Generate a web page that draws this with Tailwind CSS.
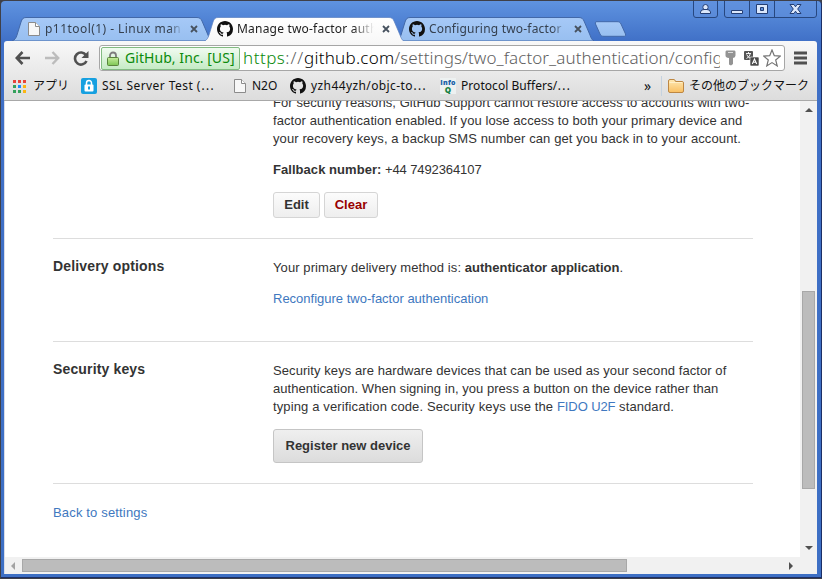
<!DOCTYPE html>
<html lang="en">
<head>
<meta charset="utf-8">
<title>Manage two-factor authentication</title>
<script src="https://cdn.jsdelivr.net/npm/@tailwindcss/browser@4"></script>
</head>
<body class="w-[822px] h-[579px] overflow-hidden bg-[#3f4048]">
<svg class="absolute w-0 h-0">
  <defs>
    <linearGradient id="inactive" x1="0" y1="0" x2="0" y2="1"><stop offset="0" stop-color="#a6c9f7"/><stop offset="1" stop-color="#98bff0"/></linearGradient>
    <linearGradient id="active" x1="0" y1="0" x2="0" y2="1"><stop offset="0" stop-color="#ffffff"/><stop offset="1" stop-color="#f8f8f8"/></linearGradient>
    <linearGradient id="folder" x1="0" y1="0" x2="0" y2="1"><stop offset="0" stop-color="#ffe9b4"/><stop offset="1" stop-color="#f9bf62"/></linearGradient>
    <linearGradient id="lock" x1="0" y1="0" x2="0" y2="1"><stop offset="0" stop-color="#c5ee9c"/><stop offset="1" stop-color="#7cc653"/></linearGradient>
    <symbol id="octocat" viewBox="0 0 16 16"><path fill="#111" d="M8 0C3.58 0 0 3.58 0 8c0 3.54 2.29 6.53 5.47 7.59.4.07.55-.17.55-.38 0-.19-.01-.82-.01-1.49-2.01.37-2.53-.49-2.69-.94-.09-.23-.48-.94-.82-1.13-.28-.15-.68-.52-.01-.53.63-.01 1.08.58 1.23.82.72 1.21 1.87.87 2.33.66.07-.52.28-.87.51-1.07-1.78-.2-3.64-.89-3.64-3.95 0-.87.31-1.59.82-2.15-.08-.2-.36-1.02.08-2.12 0 0 .67-.21 2.2.82a7.6 7.6 0 0 1 4 0c1.53-1.04 2.2-.82 2.2-.82.44 1.1.16 1.92.08 2.12.51.56.82 1.27.82 2.15 0 3.07-1.87 3.75-3.65 3.95.29.25.54.73.54 1.48 0 1.07-.01 1.93-.01 2.2 0 .21.15.46.55.38A8.01 8.01 0 0 0 16 8c0-4.42-3.58-8-8-8z"/></symbol>
    <symbol id="page" viewBox="0 0 12 14"><path d="M.5.5h7l4 4v9H.5z" fill="#f7f7f7" stroke="#8b8b8b"/><path d="M7.5.5v4h4" fill="#fff" stroke="#8b8b8b"/></symbol>
    <symbol id="close" viewBox="0 0 8 8"><path d="M1 1l6 6M7 1L1 7" stroke="#47525f" stroke-width="1.8"/></symbol>
  </defs>
</svg>
<div class="w-[821px] h-[577px] mt-px ml-px rounded-t-[4px] bg-linear-to-b from-[#5f93e0] via-[#3f6fc6] via-[42px] to-[#3d6fc4] pl-[3px] pr-[4px] flex flex-col border-r border-b border-[#1c2f66] font-['Noto_Sans','Noto_Sans_CJK_JP',sans-serif]">
  <div class="h-[40px] shrink-0 relative flex text-[12px] text-[#35404f]">
    <div class="ml-[8px] w-[200px] h-[24px] mt-[16px] relative shrink-0">
      <svg class="absolute inset-0" width="200" height="24" viewBox="0 0 200 24"><path d="M0 24C3 23 4 21 5 18L9 5C10 2 11 .5 14 .5H185C188 .5 189 2 190 4L196 18C197 21 198 23 200 24z" fill="url(#inactive)" stroke="#4268a8"/></svg>
      <div class="relative flex items-center h-[23px] pl-[16px]">
        <svg width="12" height="14"><use href="#page" width="12" height="14"/></svg>
        <span class="ml-[5px] w-[138px] overflow-hidden whitespace-nowrap tracking-[0.45px] mask-r-from-90%">p11tool(1) - Linux man</span>
        <svg class="ml-[7px]" width="8" height="8"><use href="#close" width="8" height="8"/></svg>
      </div>
    </div>
    <div class="-ml-[8px] w-[200px] h-[24px] mt-[16px] relative shrink-0 z-10 text-[#222]">
      <svg class="absolute inset-0" width="200" height="25" viewBox="0 0 200 25"><path d="M0 24.5C3 23 4 21 5 18L9 5C10 2 11 .5 14 .5H185C188 .5 189 2 190 4L196 18C197 21 198 23 200 24.5z" fill="url(#active)" stroke="#5a7fc0" stroke-width=".7"/><path d="M0 24.500H200" stroke="#f8f8f8"/></svg>
      <div class="relative flex items-center h-[23px] pl-[13px]">
        <svg width="16" height="16"><use href="#octocat" width="16" height="16"/></svg>
        <span class="ml-[4px] w-[137px] overflow-hidden whitespace-nowrap tracking-[0.2px] mask-r-from-85%">Manage two-factor auth</span>
        <svg class="ml-[8px]" width="8" height="8"><use href="#close" width="8" height="8"/></svg>
      </div>
    </div>
    <div class="-ml-[8px] w-[200px] h-[24px] mt-[16px] relative shrink-0">
      <svg class="absolute inset-0" width="200" height="24" viewBox="0 0 200 24"><path d="M0 24C3 23 4 21 5 18L9 5C10 2 11 .5 14 .5H183C186 .5 187 2 188 4L194 18C195 21 196 23 198 24z" fill="url(#inactive)" stroke="#4268a8"/></svg>
      <div class="relative flex items-center h-[23px] pl-[13px]">
        <svg width="16" height="16"><use href="#octocat" width="16" height="16"/></svg>
        <span class="ml-[4px] w-[137px] overflow-hidden whitespace-nowrap tracking-[0.2px] mask-r-from-90%">Configuring two-factor</span>
        <svg class="ml-[8px]" width="8" height="8"><use href="#close" width="8" height="8"/></svg>
      </div>
    </div>
    <svg class="-ml-[2px] mt-[20px] shrink-0" width="34" height="16" viewBox="0 0 34 16"><path d="M3 .7H23C25 .7 26 1 27 3L31.500 13C32 15 31 15.300 30 15.300H10C8 15.300 7 15 6 13L1.500 3C1 1.500 1.500 .7 3 .7z" fill="url(#inactive)" stroke="#4268a8"/></svg>
    <svg class="absolute left-[689px] top-0" width="124" height="18" viewBox="0 0 124 18" stroke="#27477f">
      <path d="M.5 0V14Q.5 16.500 3 16.500H22Q24.500 16.500 24.500 14V0M31.500 0V14Q31.500 16.500 34 16.500H121Q123.500 16.500 123.500 14V0M56.500 0V16.500M81.500 0V16.500" fill="#628fdc" fill-opacity=".5"/>
      <g fill="#dbe7fb" stroke="#243e74"><circle cx="12.500" cy="6.200" r="2.700"/><path d="M7.500 12.500V11Q8 8.500 11 8.500H14Q17 8.500 17.500 11V12.500zM38.500 9.500H49.500V12.500H38.500z"/><path d="M63.500 3.500H74.500V12.500H63.500zM67.500 6.500V9.500H70.500V6.500z" fill-rule="evenodd"/><path transform="translate(7.500 0)" d="M89.500 3.500H93.500L95 5.800L96.500 3.500H100.500L97.200 8L100.500 12.500H96.500L95 10.200L93.500 12.500H89.500L92.800 8z"/></g>
    </svg>
  </div>
  <div class="h-[60px] shrink-0 rounded-t-[3px] bg-linear-to-b from-[#f8f8f8] to-[#dcdcdc] flex flex-col relative">
    <div class="h-[34px] flex items-center pl-[11px]">
      <svg width="16" height="14" viewBox="0 0 16 14" fill="none" stroke="#505050" stroke-width="2.600"><path d="M15 7H2M7.500 1L1.800 7L7.500 13"/></svg>
      <svg class="ml-[13px]" width="16" height="14" viewBox="0 0 16 14" fill="none" stroke="#bcbcbc" stroke-width="2.400"><path d="M1 7H14M8.500 1L14.200 7L8.500 13"/></svg>
      <svg class="ml-[13px]" width="16" height="15" viewBox="0 0 16 15"><path d="M13 4.200A6 6 0 1 0 13.500 10" fill="none" stroke="#505050" stroke-width="2.600"/><path d="M15.500 0V7H8.500z" fill="#505050"/></svg>
      <div class="ml-[10px] w-[686px] h-[26px] border border-[#a6a6a6] rounded-[3px] bg-white flex items-center pl-px">
        <div class="w-[139px] h-[23px] shrink-0 border border-[#82bb82] rounded-[2px] bg-linear-to-b from-[#f1fbf1] to-[#c5ebc5] flex items-center pl-[5px]">
          <svg width="12" height="15" viewBox="0 0 12 15"><path d="M3 7V4.500a3 3 0 0 1 6 0V7" fill="none" stroke="#7d7d7d" stroke-width="1.800"/><rect x=".5" y="6.500" width="11" height="8" rx="1" fill="url(#lock)" stroke="#59853c"/></svg>
          <span class="ml-[6px] text-[14px] leading-5 tracking-[0.06px] whitespace-nowrap text-[#0b8a0b]">GitHub, Inc. [US]</span>
        </div>
        <div class="w-[477px] ml-[3px] shrink-0 overflow-hidden whitespace-nowrap text-[17px] leading-[23px] font-light text-[#606060] -mt-px"><span class="text-[#0b8a0b] tracking-[0.5px]">https</span><span class="tracking-[0.9px]">://</span><span class="text-black tracking-[0.25px]">github.com</span><span class="tracking-[0.07px]">/settings/two_factor_authentication/config</span></div>
        <svg class="ml-[5px] shrink-0" width="11" height="16" viewBox="0 0 11 16"><path d="M1.500 .5H9.500Q10.500 .5 10.500 2V5.500Q10.500 7.500 8 8V14L6 15.500L4 14.500V8Q.5 7.500 .5 5.500V2Q.5 .5 1.500 .5z" fill="#939393"/><path d="M3 2.500H8" stroke="#ddd"/></svg>
        <svg class="ml-[8px] shrink-0" width="15" height="15" viewBox="0 0 15 15"><rect width="9" height="9" rx="1" fill="#555"/><path d="M2 2.500H7M4.500 1V2.500M2.500 7.500Q6 6 6.300 2.500M2.700 3.500Q4 6.500 6.700 7.500" stroke="#fff" fill="none" stroke-width=".9"/><rect x="6" y="6" width="9" height="9" rx="1" fill="#4b4b4b" stroke="#fff" stroke-width=".6"/><path d="M8.300 13L10.500 8L12.700 13M9.200 11.300H11.800" stroke="#fff" fill="none" stroke-width="1.100"/></svg>
        <svg class="ml-[4px] shrink-0" width="18" height="18" viewBox="0 0 18 18"><path d="M9 1L11.300 6.700L17.300 7.100L12.700 11L14.200 16.900L9 13.600L3.800 16.900L5.300 11L.7 7.100L6.700 6.700z" fill="#fff" stroke="#747474" stroke-width="1.200"/></svg>
      </div>
      <svg class="ml-[9px]" width="13" height="14" viewBox="0 0 13 14" stroke="#505050" stroke-width="3"><path d="M0 2H13M0 7H13M0 12H13"/></svg>
    </div>
    <div class="h-[25px] flex items-center text-[12px] leading-[16px] text-[#111] pl-[9px] pb-[3px] whitespace-nowrap">
      <svg width="13" height="13" viewBox="0 0 13 13"><path d="M0 0h3v3H0zM5 0h3v3H5zM10 0h3v3h-3z" fill="#e8443a"/><path d="M0 5h3v3H0zM0 10h3v3H0zM5 10h3v3H5z" fill="#35a15c"/><path d="M5 5h3v3H5z" fill="#1a8cff"/><path d="M10 5h3v3h-3zM10 10h3v3h-3z" fill="#fbb612"/></svg>
      <div class="w-[55px] pl-[7px]">アプリ</div>
      <svg width="16" height="16" viewBox="0 0 16 16"><rect width="16" height="16" rx="2" fill="#16a0e0"/><path d="M5.500 7V5a2.500 2.500 0 0 1 5 0V7" fill="none" stroke="#fff" stroke-width="1.500"/><rect x="3.500" y="6.500" width="9" height="7" rx="1" fill="#fff"/><path d="M8 8.500V11.500" stroke="#16a0e0" stroke-width="2"/></svg>
      <div class="w-[137px] h-[17px] pl-[5px] tracking-[0.45px]">SSL Server Test (⋯</div>
      <svg width="12" height="14"><use href="#page" width="12" height="14"/></svg>
      <div class="w-[44px] pl-[6px]">N2O</div>
      <svg width="16" height="16"><use href="#octocat" width="16" height="16"/></svg>
      <div class="w-[134px] h-[17px] pl-[5px] tracking-[0.4px]">yzh44yzh/objc-to⋯</div>
      <svg width="16" height="16" viewBox="0 0 16 16"><rect width="16" height="16" fill="#edf1f1"/><text x=".3" y="6.500" font-family="Open Sans, sans-serif" font-size="7" font-weight="800" fill="#1760a8" textLength="15.200">Info</text><text x="4.800" y="14.500" font-family="Open Sans, sans-serif" font-size="8" font-weight="800" fill="#178044">Q</text></svg>
      <div class="w-[188px] h-[17px] pl-[5px] tracking-[0.05px]">Protocol Buffers/⋯</div>
      <span class="w-[17px] text-[14px]">»</span>
      <div class="w-px h-[20px] bg-[#c5d2df]"></div>
      <svg class="ml-[6px]" width="16" height="14" viewBox="0 0 16 14"><path d="M.5 12V2Q.5 .5 2 .5H6Q7 .5 7.500 2.500H14Q15.500 2.500 15.500 4V12Q15.500 13.500 14 13.500H2Q.5 13.500 .5 12z" fill="url(#folder)" stroke="#bd8743"/><path d="M1.500 3.500H14.500" stroke="#fff0c8"/></svg>
      <div class="pl-[5px]">その他のブックマーク</div>
    </div>
    <div class="absolute left-0 right-0 bottom-0 h-px bg-[#a8a8a8]"></div>
  </div>
  <div class="h-[473px] flex bg-[#f1f1f1] border-l border-[#d8dde8]">
    <div class="w-[795px] flex flex-col">
      <main class="h-[456px] overflow-hidden bg-white pl-[48px] pr-[47px] font-['Liberation_Sans',Arial,sans-serif] text-[13px] leading-[18px] text-[#333] whitespace-nowrap">
        <section class="pl-[220px] -mt-[7px] h-[145px] border-b border-[#ddd]">
          <p class="tracking-[0.075px]">For security reasons, GitHub Support cannot restore access to accounts with two-<br>factor authentication enabled. If you lose access to both your primary device and<br><span class="tracking-[0.1px]">your recovery keys, a backup SMS number can get you back in to your account.</span></p>
          <p class="mt-[13px]"><b class="tracking-[0.05px]">Fallback number:</b><span class="tracking-[-0.1px]"> +44 7492364107</span></p>
          <div class="flex gap-1 mt-[13px] font-bold">
            <button class="w-[47px] h-[26px] border border-[#d5d5d5] rounded-[3px] bg-linear-to-b from-[#fcfcfc] to-[#eee]">Edit</button>
            <button class="w-[54px] h-[26px] border border-[#d5d5d5] rounded-[3px] bg-linear-to-b from-[#fcfcfc] to-[#eee] text-[#900]">Clear</button>
          </div>
        </section>
        <section class="flex h-[103px] border-b border-[#ddd]">
          <h2 class="w-[220px] pt-[18px] text-[14px] font-bold tracking-[0.15px]">Delivery options</h2>
          <div class="pt-[20px]"><p><span class="tracking-[0.09px]">Your primary delivery method is: </span><b>authenticator application</b>.</p><p class="mt-[13px]"><a class="text-[#4078c0]">Reconfigure two-factor authentication</a></p></div>
        </section>
        <section class="flex h-[142px] border-b border-[#ddd]">
          <h2 class="w-[220px] pt-[18px] text-[14px] font-bold tracking-[0.15px]">Security keys</h2>
          <div class="pt-[20px]"><p class="tracking-[0.08px]">Security keys are hardware devices that can be used as your second factor of<br><span class="tracking-[0.04px]">authentication. When signing in, you press a button on the device rather than</span><br><span class="tracking-[0.13px]">typing a verification code. Security keys use the </span><a class="text-[#4078c0] tracking-[-0.1px]">FIDO U2F</a> standard.</p>
          <button class="block mt-[13px] w-[150px] h-[34px] border border-[#c5c5c5] rounded-[3px] bg-linear-to-b from-[#efefef] to-[#dcdcdc] font-bold">Register new device</button></div>
        </section>
        <p class="mt-[20px] tracking-[0.16px]"><a class="text-[#4078c0]">Back to settings</a></p>
      </main>
      <div class="h-[17px] flex items-center">
        <svg class="ml-[6px]" width="4" height="8"><path d="M4 0V8L0 4z" fill="#a3a3a3"/></svg>
        <div class="ml-[7px] w-[605px] h-[13px] bg-[#bcbcbc] border border-[#a8a8a8]"></div>
        <svg class="ml-auto mr-[7px]" width="4" height="8"><path d="M0 0V8L4 4z" fill="#505050"/></svg>
      </div>
    </div>
    <div class="w-[17px] h-[456px] flex flex-col items-center">
      <svg class="mt-[7px]" width="8" height="4"><path d="M0 4H8L4 0z" fill="#505050"/></svg>
      <div class="mt-[179px] w-[13px] h-[198px] bg-[#bcbcbc] border border-[#a8a8a8]"></div>
      <svg class="mt-auto mb-[7px]" width="8" height="4"><path d="M0 0H8L4 4z" fill="#505050"/></svg>
    </div>
  </div>
</div>
</body>
</html>
